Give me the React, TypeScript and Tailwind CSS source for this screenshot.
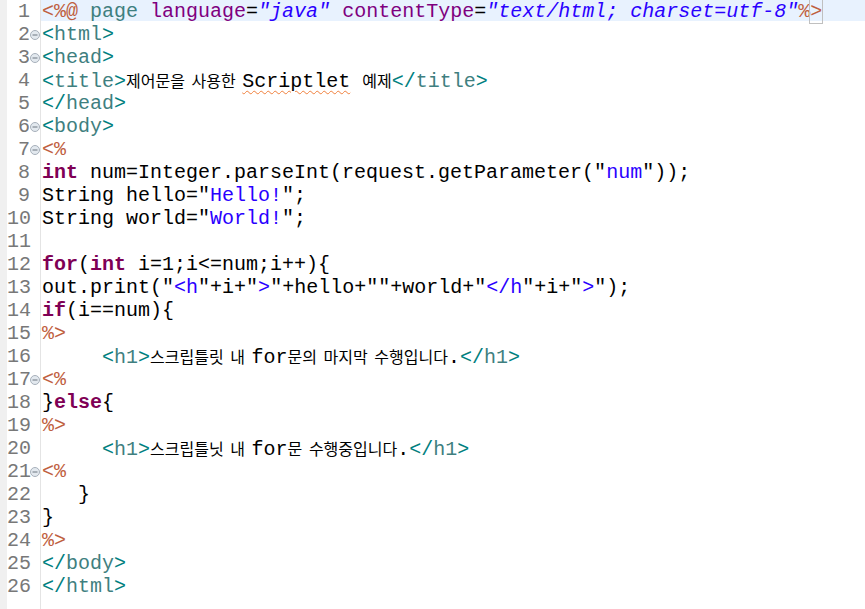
const D = "text-[#bf5f3f]";
const TB = "text-[#008080]";
const TN = "text-[#3f7f7f]";
const AT = "text-[#7f007f]";
const VAL = "text-[#2a00ff] italic";
const KW = "text-[#7f0055] font-bold";
const STR = "text-[#2a00ff]";

const K = ({ children }: { children: string }) => (
  <span className="font-['Noto_Sans_CJK_KR',sans-serif] text-[16px] [word-spacing:3px]">
    {children}
  </span>
);

const Tag = ({ name, close }: { name: string; close?: boolean }) => (
  <>
    <span className={TB}>{close ? "</" : "<"}</span>
    <span className={TN}>{name}</span>
    <span className={TB}>&gt;</span>
  </>
);

const Str = ({ t }: { t: string }) => (
  <>
    "<span className={STR}>{t}</span>"
  </>
);

const folds = [2, 3, 6, 7, 17, 21];

const FoldIcon = () => (
  <svg width="10" height="10" viewBox="0 0 10 10">
    <circle cx="5" cy="5" r="4.5" fill="#e3e9ef" stroke="#a7b0ba" />
    <line x1="2.5" y1="5" x2="7.5" y2="5" stroke="#6d7680" />
  </svg>
);

const lines = [
  <>
    <span className={D}>&lt;%@</span> <span className={TN}>page</span>{" "}
    <span className={AT}>language</span>=<span className={VAL}>"java"</span>{" "}
    <span className={AT}>contentType</span>=
    <span className={VAL}>"text/html; charset=utf-8"</span>
    <span className={D}>%</span>
    <span className={`${D} outline outline-[#c0c0c0]`}>&gt;</span>
  </>,
  <Tag name="html" />,
  <Tag name="head" />,
  <>
    <Tag name="title" />
    <K>제어문을 사용한 </K>
    <span className="underline decoration-wavy decoration-[#f0803c] underline-offset-[3px] decoration-1">
      Scriptlet
    </span>{" "}
    <K>예제</K>
    <Tag name="title" close />
  </>,
  <Tag name="head" close />,
  <Tag name="body" />,
  <span className={D}>&lt;%</span>,
  <>
    <span className={KW}>int</span> num=Integer.parseInt(request.getParameter(
    <Str t="num" />
    ));
  </>,
  <>
    String hello=<Str t="Hello!" />;
  </>,
  <>
    String world=<Str t="World!" />;
  </>,
  <></>,
  <>
    <span className={KW}>for</span>(<span className={KW}>int</span> i=1;i&lt;=num;i++){"{"}
  </>,
  <>
    out.print(<Str t="<h" />+i+<Str t=">" />+hello+""+world+<Str t="</h" />+i+
    <Str t=">" />
    );
  </>,
  <>
    <span className={KW}>if</span>(i==num){"{"}
  </>,
  <span className={D}>%&gt;</span>,
  <>
    {"     "}
    <Tag name="h1" />
    <K>스크립틀릿 내 </K>for<K>문의 마지막 수행입니다</K>.
    <Tag name="h1" close />
  </>,
  <span className={D}>&lt;%</span>,
  <>
    {"}"}
    <span className={KW}>else</span>
    {"{"}
  </>,
  <span className={D}>%&gt;</span>,
  <>
    {"     "}
    <Tag name="h1" />
    <K>스크립틀닛 내 </K>for<K>문 수행중입니다</K>.
    <Tag name="h1" close />
  </>,
  <span className={D}>&lt;%</span>,
  <>{"   }"}</>,
  <>{"}"}</>,
  <span className={D}>%&gt;</span>,
  <Tag name="body" close />,
  <Tag name="html" close />,
];

export default function App() {
  return (
    <div className="flex h-[609px] w-[865px] overflow-hidden bg-white font-['Liberation_Mono',monospace] text-[20px] text-black">
      <div className="w-[7px] shrink-0 bg-[#f0f0f0]" />
      <div className="flex w-[33px] shrink-0 flex-col">
        {lines.map((_, i) => (
          <div key={i} className="flex h-[23px] items-center">
            <div className="w-[23px] text-right leading-[23px] text-[#787878]">{i + 1}</div>
            <div className="flex w-[10px] justify-end">
              {folds.includes(i + 1) && <FoldIcon />}
            </div>
          </div>
        ))}
      </div>
      <div className="w-px shrink-0 bg-[#e4e4e4]" />
      <div className="flex min-w-0 flex-1 flex-col">
        {lines.map((l, i) => (
          <div
            key={i}
            className={`h-[23px] whitespace-pre pl-[1px] leading-[23px] ${
              i === 0 ? "bg-[linear-gradient(#e8f2fe_0_21px,transparent_21px)]" : ""
            }`}
          >
            {l}
          </div>
        ))}
      </div>
    </div>
  );
}
